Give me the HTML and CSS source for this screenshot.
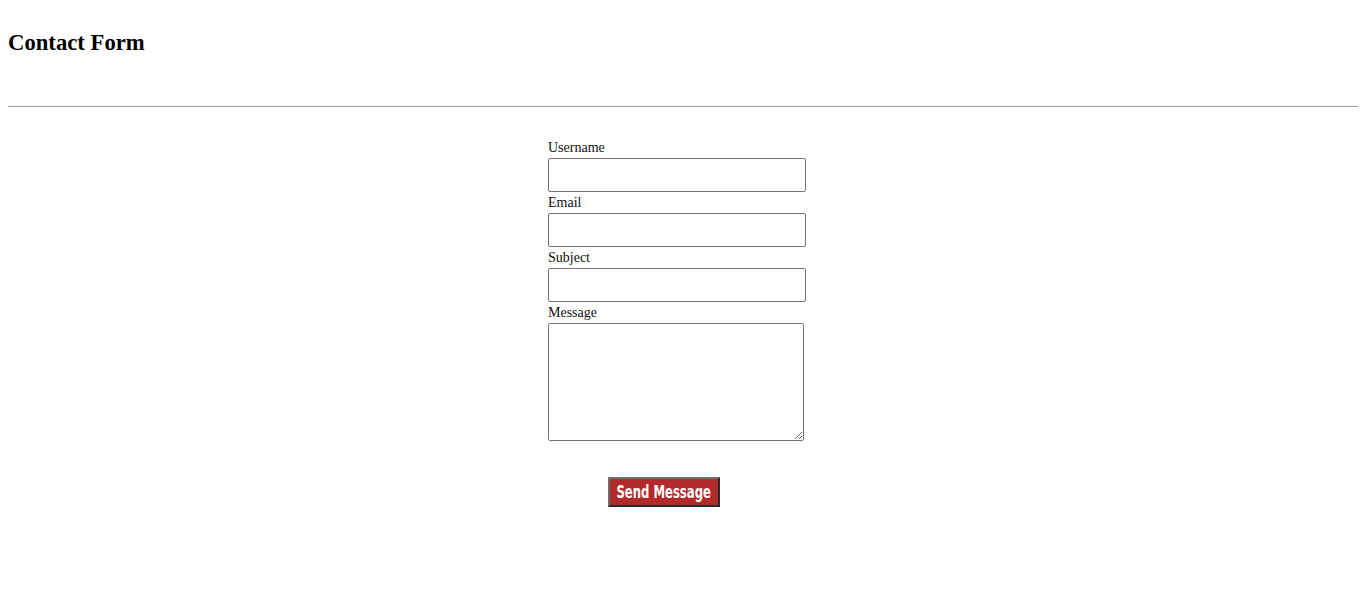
FILE: index.html
```html
<!DOCTYPE html>
<html lang="en">
<head>
<meta charset="utf-8">
<title>Contact Form</title>
<link rel="stylesheet" href="styles.css">
</head>
<body>
<header class="page-header">
  <h1 class="title">Contact Form</h1>
</header>
<hr class="divider">
<main class="form-wrap">
  <form class="contact-form">
    <label class="field-label" for="username">Username</label>
    <input class="field-input" type="text" id="username">
    <label class="field-label" for="email">Email</label>
    <input class="field-input" type="email" id="email">
    <label class="field-label" for="subject">Subject</label>
    <input class="field-input" type="text" id="subject">
    <label class="field-label" for="message">Message</label>
    <textarea class="field-area" id="message"></textarea>
    <div class="actions">
      <button class="send-btn" type="submit"><span class="send-text">Send Message</span></button>
    </div>
  </form>
</main>
</body>
</html>
```

FILE: styles.css
```css
html, body {
  margin: 0;
  padding: 0;
  background: #fff;
}
body {
  padding: 8px;
  font-family: "Liberation Serif", "Times New Roman", serif;
  color: #000;
}
.page-header {
  padding-top: 22px;
  height: 76px;
  box-sizing: border-box;
}
.title {
  margin: 0;
  font-size: 22.7px;
  line-height: 26px;
  font-weight: bold;
}
.divider {
  margin: 22px 0 0 0;
  border: 0;
  border-top: 1px solid #9a9a9a;
  height: 0;
}
.form-wrap {
  width: 270px;
  margin: 30px auto 0;
}
.contact-form {
  display: flex;
  flex-direction: column;
  align-items: flex-start;
}
.field-label {
  display: block;
  font-size: 14px;
  line-height: 21px;
  color: #111;
}
.field-input {
  width: 258px;
  height: 34px;
  box-sizing: border-box;
  border: 1px solid #767676;
  border-radius: 2px;
  margin: 0;
  padding: 2px 4px;
  font-size: 14px;
}
.field-area {
  width: 256px;
  height: 118px;
  box-sizing: border-box;
  border: 1px solid #767676;
  border-radius: 2px;
  margin: 0;
  padding: 2px;
  font-size: 14px;
}
.actions {
  margin-top: 36px;
  padding-left: 60px;
}
.send-btn {
  display: flex;
  align-items: center;
  justify-content: center;
  width: 112px;
  height: 30px;
  box-sizing: border-box;
  background: #b22a2a;
  color: #fff;
  border: 2px solid;
  border-color: #6e6e6e #2b2b2b #2b2b2b #6e6e6e;
  padding: 0;
  overflow: hidden;
  white-space: nowrap;
}
.send-text {
  display: inline-block;
  font-family: "DejaVu Sans Condensed", "DejaVu Sans", sans-serif;
  font-weight: bold;
  font-size: 18px;
  line-height: 24px;
  transform: scaleX(0.72);
  transform-origin: center;
}
```
